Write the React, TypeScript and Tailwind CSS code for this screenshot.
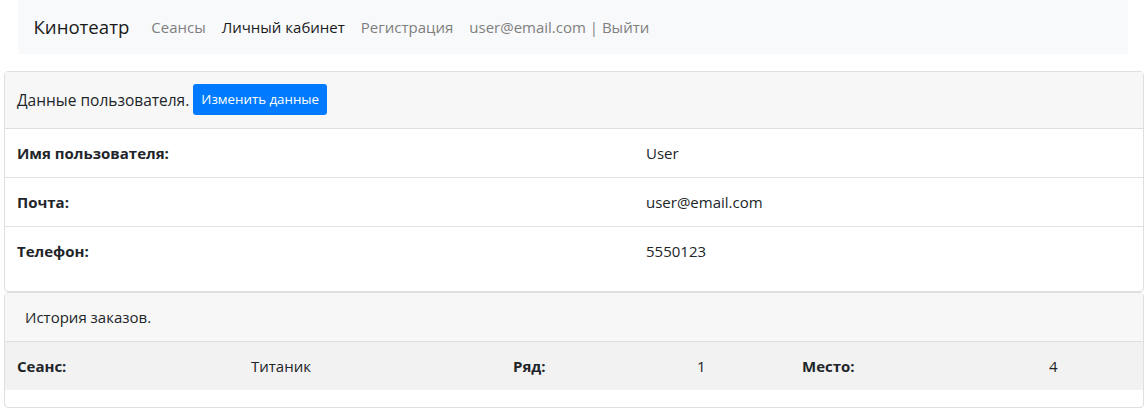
import React from "react";

const userRows = [
  { label: "Имя пользователя:", value: "User" },
  { label: "Почта:", value: "user@email.com" },
  { label: "Телефон:", value: "5550123" },
];

const orders = [{ film: "Титаник", row: 1, seat: 4 }];

export default function App() {
  return (
    <div className="min-h-[409px] bg-white font-['Open_Sans',sans-serif] text-[15px] leading-6 text-[#212529]">
      {/* Навигация */}
      <nav className="mx-auto flex h-[54px] w-[1110px] items-center bg-[#f8f9fa] px-4">
        <span className="mr-[14px] text-[18.6px] leading-[30px] text-[#1a1a1a]">Кинотеатр</span>
        <a className="px-2 text-[#7f7f7f]">Сеансы</a>
        <a className="px-2 text-[#1a1a1a]">Личный кабинет</a>
        <a className="px-2 text-[#7f7f7f]">Регистрация</a>
        <a className="px-2 text-[#7f7f7f]">user@email.com | Выйти</a>
      </nav>

      {/* Данные пользователя */}
      <div className="ml-[4px] mt-[17px] w-[1140px] rounded-[4px] border border-[#dfdfdf]">
        <div className="flex h-[57px] items-center border-b border-[#dfdfdf] bg-[#f7f7f7] px-3 pb-[1px]">
          <span className="text-[15.5px]">Данные пользователя.</span>
          <button className="ml-[4px] h-[31px] rounded-[3px] bg-[#007bff] px-2 text-[13.3px] leading-[21px] text-white">
            Изменить данные
          </button>
        </div>
        <div className="mb-4">
          {userRows.map((r, i) => (
            <div
              key={r.label}
              className={`grid h-[48px] grid-cols-[629px_1fr] items-center ${
                i > 0 ? "box-content border-t border-[#dee2e6]" : ""
              }`}
            >
              <span className="px-3 font-bold">{r.label}</span>
              <span className="px-3">{r.value}</span>
            </div>
          ))}
        </div>
      </div>

      {/* История заказов */}
      <div className="ml-[4px] w-[1140px] rounded-[4px] border border-[#dfdfdf]">
        <div className="flex h-[49px] items-center border-b border-[#dfdfdf] bg-[#f7f7f7] px-5">
          История заказов.
        </div>
        <div className="mb-[17px]">
          {orders.map((o) => (
            <div
              key={o.film}
              className="grid h-[48px] grid-cols-[234px_262px_184px_105px_247px_1fr] items-center bg-[#f2f2f2]"
            >
              <span className="px-3 font-bold">Сеанс:</span>
              <span className="px-3">{o.film}</span>
              <span className="px-3 font-bold">Ряд:</span>
              <span className="px-3">{o.row}</span>
              <span className="px-3 font-bold">Место:</span>
              <span className="px-3">{o.seat}</span>
            </div>
          ))}
        </div>
      </div>
    </div>
  );
}
